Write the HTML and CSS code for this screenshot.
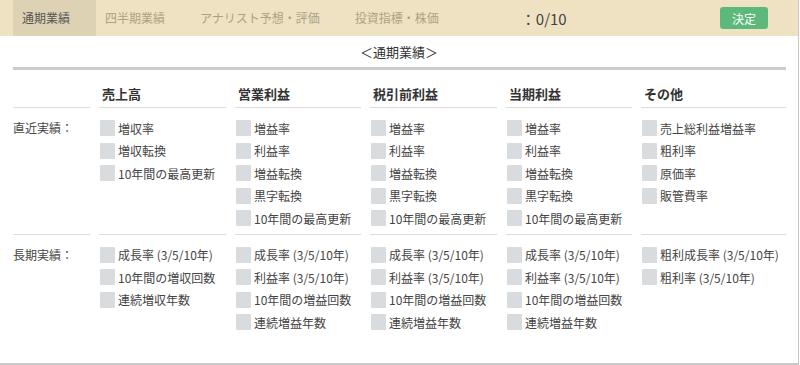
FILE: index.html
```html
<!DOCTYPE html>
<html lang="ja">
<head>
    <meta charset="UTF-8">
    <meta name="viewport" content="width=device-width, initial-scale=1.0">
    <title>スクリーニング条件</title>
    <link rel="stylesheet" href="styles.css">
</head>
<body>
    <div class="panel">
        <div class="tab-bar">
            <div class="tab active">通期業績</div>
            <div class="tab">四半期業績</div>
            <div class="tab">アナリスト予想・評価</div>
            <div class="tab">投資指標・株価</div>
            <div class="count">：0/10</div>
            <button class="decide-btn">決定</button>
        </div>

        <div class="section-title">＜通期業績＞</div>
        <div class="title-rule"></div>

        <div class="grid">
            <!-- header row -->
            <div class="head"></div>
            <div class="head">売上高</div>
            <div class="head">営業利益</div>
            <div class="head">税引前利益</div>
            <div class="head">当期利益</div>
            <div class="head">その他</div>

            <!-- 直近実績 -->
            <div class="cell label first">直近実績：</div>
            <div class="cell first">
                <label class="item"><span class="box"></span>増収率</label>
                <label class="item"><span class="box"></span>増収転換</label>
                <label class="item"><span class="box"></span>10年間の最高更新</label>
            </div>
            <div class="cell first">
                <label class="item"><span class="box"></span>増益率</label>
                <label class="item"><span class="box"></span>利益率</label>
                <label class="item"><span class="box"></span>増益転換</label>
                <label class="item"><span class="box"></span>黒字転換</label>
                <label class="item"><span class="box"></span>10年間の最高更新</label>
            </div>
            <div class="cell first">
                <label class="item"><span class="box"></span>増益率</label>
                <label class="item"><span class="box"></span>利益率</label>
                <label class="item"><span class="box"></span>増益転換</label>
                <label class="item"><span class="box"></span>黒字転換</label>
                <label class="item"><span class="box"></span>10年間の最高更新</label>
            </div>
            <div class="cell first">
                <label class="item"><span class="box"></span>増益率</label>
                <label class="item"><span class="box"></span>利益率</label>
                <label class="item"><span class="box"></span>増益転換</label>
                <label class="item"><span class="box"></span>黒字転換</label>
                <label class="item"><span class="box"></span>10年間の最高更新</label>
            </div>
            <div class="cell first">
                <label class="item"><span class="box"></span>売上総利益増益率</label>
                <label class="item"><span class="box"></span>粗利率</label>
                <label class="item"><span class="box"></span>原価率</label>
                <label class="item"><span class="box"></span>販管費率</label>
            </div>

            <!-- 長期実績 -->
            <div class="cell label">長期実績：</div>
            <div class="cell">
                <label class="item"><span class="box"></span>成長率 (3/5/10年)</label>
                <label class="item"><span class="box"></span>10年間の増収回数</label>
                <label class="item"><span class="box"></span>連続増収年数</label>
            </div>
            <div class="cell">
                <label class="item"><span class="box"></span>成長率 (3/5/10年)</label>
                <label class="item"><span class="box"></span>利益率 (3/5/10年)</label>
                <label class="item"><span class="box"></span>10年間の増益回数</label>
                <label class="item"><span class="box"></span>連続増益年数</label>
            </div>
            <div class="cell">
                <label class="item"><span class="box"></span>成長率 (3/5/10年)</label>
                <label class="item"><span class="box"></span>利益率 (3/5/10年)</label>
                <label class="item"><span class="box"></span>10年間の増益回数</label>
                <label class="item"><span class="box"></span>連続増益年数</label>
            </div>
            <div class="cell">
                <label class="item"><span class="box"></span>成長率 (3/5/10年)</label>
                <label class="item"><span class="box"></span>利益率 (3/5/10年)</label>
                <label class="item"><span class="box"></span>10年間の増益回数</label>
                <label class="item"><span class="box"></span>連続増益年数</label>
            </div>
            <div class="cell">
                <label class="item"><span class="box"></span>粗利成長率 (3/5/10年)</label>
                <label class="item"><span class="box"></span>粗利率 (3/5/10年)</label>
            </div>
        </div>
    </div>
</body>
</html>
```

FILE: styles.css
```css
* {
    margin: 0;
    padding: 0;
    box-sizing: border-box;
}

body {
    font-family: "Noto Sans CJK JP", sans-serif;
    background: #fff;
    color: #444;
}

.panel {
    width: 799px;
    height: 365px;
    border-right: 1px solid #c9c9c9;
    border-bottom: 2px solid #c9c9c9;
    background: #fff;
}

/* tabs */
.tab-bar {
    display: flex;
    align-items: center;
    height: 36px;
    background: #eee2c2;
    padding-left: 13px;
    padding-right: 30px;
}

.tab {
    height: 36px;
    line-height: 36px;
    padding: 0 26px 0 9px;
    font-size: 12px;
    color: #ada185;
}

.tab.active {
    background: #ddd2b3;
    color: #555;
}

.count {
    flex: 1;
    padding-left: 56px;
    font-size: 15px;
    color: #444;
}

.decide-btn {
    width: 48px;
    height: 22px;
    border: none;
    border-radius: 3px;
    background: #5cb97b;
    color: #fff;
    font-family: inherit;
    font-size: 12px;
    cursor: pointer;
}

/* title */
.section-title {
    margin-top: 6px;
    line-height: 20px;
    text-align: center;
    font-size: 13px;
    color: #333;
}

.title-rule {
    height: 3px;
    margin: 5px 13px 0 13px;
    width: 773px;
    background: #cccccc;
}

/* condition grid */
.grid {
    display: grid;
    grid-template-columns: 77px 127px 126px 127px 126px 145px;
    column-gap: 9px;
    margin-left: 13px;
}

.head {
    padding: 14px 0 3px 3px;
    line-height: 20px;
    font-size: 13px;
    font-weight: bold;
    color: #333;
    border-bottom: 1px solid #dcdcdc;
}

.cell {
    padding: 9px 0 4px 0;
}

.cell.first {
    border-bottom: 1px solid #dcdcdc;
}

.label {
    line-height: 22.5px;
    font-size: 12px;
    color: #444;
}

.item {
    display: flex;
    align-items: center;
    height: 22.5px;
    font-size: 12px;
    color: #444;
    white-space: nowrap;
    cursor: pointer;
}

.box {
    width: 15px;
    height: 16px;
    margin: 0 3px 0 1px;
    background: #d9dcdf;
    border-radius: 1px;
    flex-shrink: 0;
}
```
